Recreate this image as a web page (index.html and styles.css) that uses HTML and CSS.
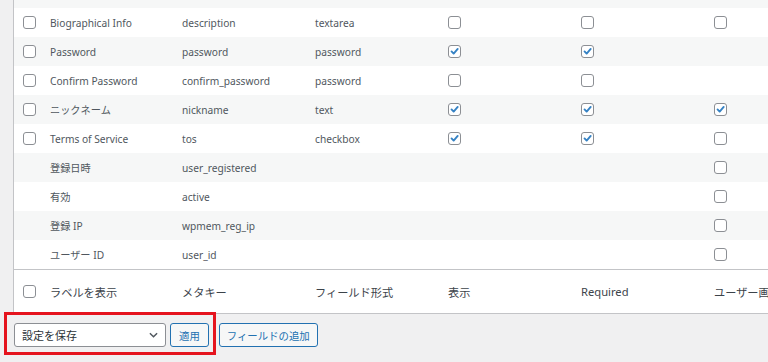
FILE: index.html
```html
<!DOCTYPE html>
<html lang="ja">
<head>
    <meta charset="UTF-8">
    <meta name="viewport" content="width=device-width, initial-scale=1.0">
    <title>フィールド設定</title>
    <link rel="stylesheet" href="styles.css">
</head>
<body>
    <div class="wrap">
        <table class="fields">
            <colgroup>
                <col class="col-check">
                <col class="col-label">
                <col class="col-meta">
                <col class="col-type">
                <col class="col-show">
                <col class="col-req">
                <col class="col-user">
            </colgroup>
            <tbody>
                <tr>
                    <td class="check"></td>
                    <td></td>
                    <td></td>
                    <td></td>
                    <td><span class="cb"></span></td>
                    <td><span class="cb"></span></td>
                    <td><span class="cb"></span></td>
                </tr>
                <tr>
                    <td class="check"><span class="cb"></span></td>
                    <td>Biographical Info</td>
                    <td>description</td>
                    <td>textarea</td>
                    <td><span class="cb"></span></td>
                    <td><span class="cb"></span></td>
                    <td><span class="cb"></span></td>
                </tr>
                <tr>
                    <td class="check"><span class="cb"></span></td>
                    <td>Password</td>
                    <td>password</td>
                    <td>password</td>
                    <td><span class="cb"><svg viewBox="0 0 13 13"><path d="M3 6.4l2.5 2.6 4.8-5.6"/></svg></span></td>
                    <td><span class="cb"><svg viewBox="0 0 13 13"><path d="M3 6.4l2.5 2.6 4.8-5.6"/></svg></span></td>
                    <td></td>
                </tr>
                <tr>
                    <td class="check"><span class="cb"></span></td>
                    <td>Confirm Password</td>
                    <td>confirm_password</td>
                    <td>password</td>
                    <td><span class="cb"></span></td>
                    <td><span class="cb"></span></td>
                    <td></td>
                </tr>
                <tr>
                    <td class="check"><span class="cb"></span></td>
                    <td>ニックネーム</td>
                    <td>nickname</td>
                    <td>text</td>
                    <td><span class="cb"><svg viewBox="0 0 13 13"><path d="M3 6.4l2.5 2.6 4.8-5.6"/></svg></span></td>
                    <td><span class="cb"><svg viewBox="0 0 13 13"><path d="M3 6.4l2.5 2.6 4.8-5.6"/></svg></span></td>
                    <td><span class="cb"><svg viewBox="0 0 13 13"><path d="M3 6.4l2.5 2.6 4.8-5.6"/></svg></span></td>
                </tr>
                <tr>
                    <td class="check"><span class="cb"></span></td>
                    <td>Terms of Service</td>
                    <td>tos</td>
                    <td>checkbox</td>
                    <td><span class="cb"><svg viewBox="0 0 13 13"><path d="M3 6.4l2.5 2.6 4.8-5.6"/></svg></span></td>
                    <td><span class="cb"><svg viewBox="0 0 13 13"><path d="M3 6.4l2.5 2.6 4.8-5.6"/></svg></span></td>
                    <td><span class="cb"></span></td>
                </tr>
                <tr>
                    <td class="check"></td>
                    <td>登録日時</td>
                    <td>user_registered</td>
                    <td></td>
                    <td></td>
                    <td></td>
                    <td><span class="cb"></span></td>
                </tr>
                <tr>
                    <td class="check"></td>
                    <td>有効</td>
                    <td>active</td>
                    <td></td>
                    <td></td>
                    <td></td>
                    <td><span class="cb"></span></td>
                </tr>
                <tr>
                    <td class="check"></td>
                    <td>登録 IP</td>
                    <td>wpmem_reg_ip</td>
                    <td></td>
                    <td></td>
                    <td></td>
                    <td><span class="cb"></span></td>
                </tr>
                <tr>
                    <td class="check"></td>
                    <td>ユーザー ID</td>
                    <td>user_id</td>
                    <td></td>
                    <td></td>
                    <td></td>
                    <td><span class="cb"></span></td>
                </tr>
            </tbody>
            <tfoot>
                <tr>
                    <td class="check"><span class="cb"></span></td>
                    <td>ラベルを表示</td>
                    <td>メタキー</td>
                    <td>フィールド形式</td>
                    <td>表示</td>
                    <td>Required</td>
                    <td>ユーザー画面</td>
                </tr>
            </tfoot>
        </table>

        <div class="tablenav">
            <div class="select">
                <span>設定を保存</span>
                <svg viewBox="0 0 10 6"><path d="M1 1l4 4 4-4"/></svg>
            </div>
            <button class="button">適用</button>
            <button class="button add">フィールドの追加</button>
        </div>

        <div class="highlight"></div>
    </div>
</body>
</html>
```

FILE: styles.css
```css
html, body {
    overflow: hidden;
}
body {
    margin: 0;
    height: 362px;
    background: #f0f0f1;
    font-family: 'Noto Sans', 'Noto Sans CJK JP', sans-serif;
    color: #50575e;
}
.wrap {
    position: relative;
    margin-top: -22px;
}
.fields {
    margin-left: 13px;
    width: 828px;
    table-layout: fixed;
    border-collapse: separate;
    border-spacing: 0;
    border: 1px solid #c3c4c7;
    background: #ffffff;
}
.col-check { width: 29px; }
.col-label { width: 132px; }
.col-meta,
.col-type,
.col-show,
.col-req,
.col-user { width: 133px; }

.fields td {
    height: 29px;
    padding: 0 7px;
    font-size: 10.2px;
    white-space: nowrap;
    overflow: hidden;
    vertical-align: middle;
}
.fields td.check {
    padding: 0 0 0 9px;
}
.fields tbody tr:nth-child(odd) {
    background: #f6f7f7;
}
.fields tfoot td {
    height: 43px;
    border-top: 1px solid #c3c4c7;
    font-size: 11.2px;
    color: #3c434a;
}

.cb {
    display: block;
    width: 13px;
    height: 13px;
    box-sizing: border-box;
    border: 1px solid #8c8f94;
    border-radius: 3px;
    background: #ffffff;
}
.cb svg {
    display: block;
    width: 11px;
    height: 11px;
    fill: none;
    stroke: #3582c4;
    stroke-width: 2.2;
    stroke-linecap: round;
    stroke-linejoin: round;
}

.tablenav {
    display: flex;
    align-items: center;
    padding: 9px 0 0 14px;
}
.select {
    display: flex;
    align-items: center;
    justify-content: space-between;
    width: 152px;
    height: 24px;
    box-sizing: border-box;
    padding: 0 7px 0 7px;
    border: 1px solid #8c8f94;
    border-radius: 3px;
    background: #ffffff;
    color: #2c3338;
    font-size: 11px;
}
.select svg {
    width: 9px;
    height: 6px;
    fill: none;
    stroke: #50575e;
    stroke-width: 1.6;
}
.button {
    height: 24px;
    margin-left: 4px;
    padding: 0 8px;
    border: 1px solid #2271b1;
    border-radius: 3px;
    background: #f6f7f7;
    color: #2271b1;
    font-family: 'Noto Sans', 'Noto Sans CJK JP', sans-serif;
    font-size: 10.4px;
}
.button.add {
    margin-left: 10px;
    padding: 0 7px;
}

/* annotation box around the bulk action */
.highlight {
    position: absolute;
    left: 4px;
    top: 334px;
    width: 212px;
    height: 43px;
    box-sizing: border-box;
    border: 3px solid #e5141e;
}
```
